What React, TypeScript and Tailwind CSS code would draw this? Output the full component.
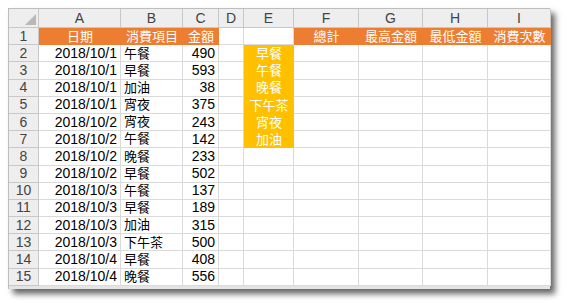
import React from 'react';

const cols = ['A', 'B', 'C', 'D', 'E', 'F', 'G', 'H', 'I'];

const rows: [string, string, string][] = [
  ['2018/10/1', '午餐', '490'],
  ['2018/10/1', '早餐', '593'],
  ['2018/10/1', '加油', '38'],
  ['2018/10/1', '宵夜', '375'],
  ['2018/10/2', '宵夜', '243'],
  ['2018/10/2', '午餐', '142'],
  ['2018/10/2', '晚餐', '233'],
  ['2018/10/2', '早餐', '502'],
  ['2018/10/3', '午餐', '137'],
  ['2018/10/3', '早餐', '189'],
  ['2018/10/3', '加油', '315'],
  ['2018/10/3', '下午茶', '500'],
  ['2018/10/4', '早餐', '408'],
  ['2018/10/4', '晚餐', '556'],
];

const categories = ['早餐', '午餐', '晚餐', '下午茶', '宵夜', '加油'];

const cell = 'h-[17.2px] border-r border-b border-[#DADADA] flex items-center overflow-hidden whitespace-nowrap';
const orange = 'h-[17.2px] bg-[#ED7D31] text-white text-[13px] flex items-center justify-center whitespace-nowrap';

function RowHead({ n }: { n: number }) {
  return (
    <div className="h-[17.2px] bg-[#EEEEEE] border-r border-b border-[#C8C8C8] flex items-center justify-center text-[#444]">
      {n}
    </div>
  );
}

export default function App() {
  return (
    <div className="w-[567px] h-[304px] bg-white p-2" style={{ fontFamily: '"Liberation Sans", "Noto Sans CJK TC", sans-serif' }}>
      <div className="w-[542px] bg-white border-l border-t border-[#BDBDBD] shadow-[5px_5px_6px_rgba(0,0,0,0.6)] text-[14px] text-black">
        <div className="grid grid-cols-[30px_82px_62px_36px_25px_50px_65px_64px_65px_63px]">
          {/* column headers */}
          <div className="h-[19px] bg-[#EEEEEE] border-r border-b border-[#C8C8C8] relative">
            <div className="absolute right-[2px] bottom-[2px] w-0 h-0 border-l-[11px] border-l-transparent border-b-[11px] border-b-[#B8B8B8]" />
          </div>
          {cols.map((c) => (
            <div key={c} className="h-[19px] bg-[#EEEEEE] border-r border-b border-[#C8C8C8] flex items-center justify-center text-[#444]">
              {c}
            </div>
          ))}

          {/* row 1 */}
          <RowHead n={1} />
          <div className={orange}>日期</div>
          <div className={orange}>消費項目</div>
          <div className={orange}>金額</div>
          <div className={cell} />
          <div className={cell} />
          <div className={orange}>總計</div>
          <div className={orange}>最高金額</div>
          <div className={orange}>最低金額</div>
          <div className={orange}>消費次數</div>

          {rows.map((r, i) => (
            <React.Fragment key={i}>
              <RowHead n={i + 2} />
              <div className={`${cell} justify-end pr-[3px]`}>{r[0]}</div>
              <div className={`${cell} pl-[3px] text-[13px]`}>{r[1]}</div>
              <div className={`${cell} justify-end pr-[3px]`}>{r[2]}</div>
              <div className={cell} />
              {i < categories.length ? (
                <div className="h-[17.2px] bg-[#FFC000] text-white text-[13px] flex items-center justify-center">
                  {categories[i]}
                </div>
              ) : (
                <div className={cell} />
              )}
              <div className={cell} />
              <div className={cell} />
              <div className={cell} />
              <div className={cell} />
            </React.Fragment>
          ))}
        </div>
        <div className="h-[3px] bg-[#E4E4E4]" />
      </div>
    </div>
  );
}
